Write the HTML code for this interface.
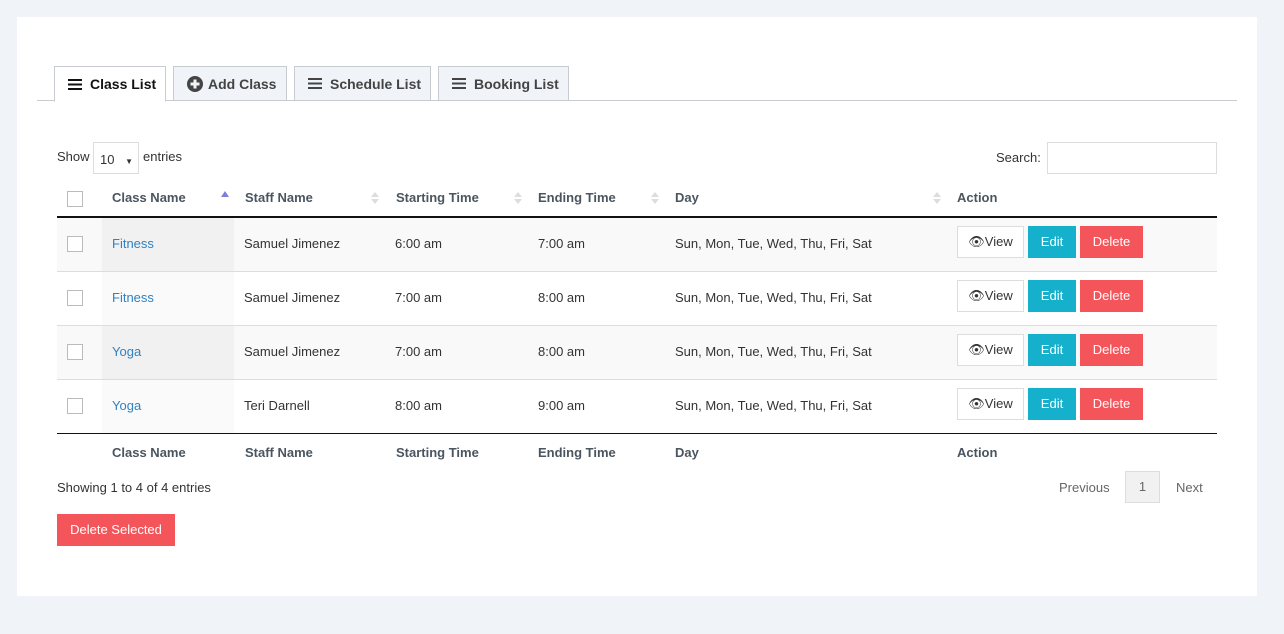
<!DOCTYPE html>
<html><head><meta charset="utf-8"><style>
*{box-sizing:border-box}
body{margin:0;background:#f0f3f7;font-family:"Liberation Sans",Arial,sans-serif;font-size:13px;color:#333;width:1284px;height:634px;overflow:hidden;position:relative}
div{white-space:nowrap}
.panel{position:absolute;left:17px;top:17px;width:1240px;height:579px;background:#fff}
.tabline{position:absolute;left:37px;top:100px;width:1200px;height:1px;background:#c8cbd0}
.tab{position:absolute;top:66px;height:35px;border:1px solid #c8cbd0;background:#f0f3f7;font-weight:bold;font-size:14px;color:#444;display:flex;align-items:center;padding-left:13px}
.tab.active{background:#fff;border-bottom-color:#fff;color:#111;height:36px}
.ham{display:inline-block;width:14px;height:11px;margin-right:8px;background:linear-gradient(currentColor 0 2px,transparent 2px 4.5px,currentColor 4.5px 6.5px,transparent 6.5px 9px,currentColor 9px 11px)}
.abs{position:absolute}
.hdr{position:absolute;font-weight:bold;color:#4a5560}
.cb{position:absolute;width:16px;height:16px;border:1px solid #bbb;background:#fff}
.row{position:absolute;left:57px;width:1160px;height:54px;border-bottom:1px solid #ddd}
.cell{position:absolute;top:18px}
.a{color:#2f82c3}
.btn{position:absolute;top:8px;height:32px;line-height:32px;text-align:center;color:#fff;font-size:13px}
.v{color:#333;border:1px solid #ddd;background:#fff;line-height:30px}
.sort{position:absolute;width:0;height:0;border-left:4px solid transparent;border-right:4px solid transparent}
</style></head><body>
<div class="panel"></div>
<div class="tabline"></div>
<div class="tab active" style="left:54px;width:112px"><span class="ham"></span>Class List</div>
<div class="tab" style="left:173px;width:114px"><svg width="16" height="16" viewBox="0 0 16 16" style="margin-right:5px"><circle cx="8" cy="8" r="8" fill="#444"/><rect x="6.5" y="3.5" width="3" height="9" fill="#f0f3f7"/><rect x="3.5" y="6.5" width="9" height="3" fill="#f0f3f7"/></svg>Add Class</div>
<div class="tab" style="left:294px;width:137px"><span class="ham"></span>Schedule List</div>
<div class="tab" style="left:438px;width:131px"><span class="ham"></span>Booking List</div>

<div class="abs" style="left:57px;top:149px">Show</div>
<div class="abs" style="left:93px;top:142px;width:46px;height:32px;border:1px solid #ddd;padding:9px 0 0 6px">10 <span style="font-size:8px;margin-left:7px">▼</span></div>
<div class="abs" style="left:143px;top:149px">entries</div>
<div class="abs" style="left:996px;top:150px">Search:</div>
<div class="abs" style="left:1047px;top:142px;width:170px;height:32px;border:1px solid #ddd"></div>

<div class="cb" style="left:67px;top:191px"></div>
<div class="hdr" style="left:112px;top:190px">Class Name</div>
<div class="sort" style="left:221px;top:191px;border-bottom:6px solid #7a7fd8"></div>
<div class="hdr" style="left:245px;top:190px">Staff Name</div>
<div class="hdr" style="left:396px;top:190px">Starting Time</div>
<div class="hdr" style="left:538px;top:190px">Ending Time</div>
<div class="hdr" style="left:675px;top:190px">Day</div>
<div class="hdr" style="left:957px;top:190px">Action</div>
<div class="sort" style="left:371px;top:192px;border-bottom:5px solid #ddd"></div><div class="sort" style="left:371px;top:199px;border-top:5px solid #ddd"></div>
<div class="sort" style="left:514px;top:192px;border-bottom:5px solid #ddd"></div><div class="sort" style="left:514px;top:199px;border-top:5px solid #ddd"></div>
<div class="sort" style="left:651px;top:192px;border-bottom:5px solid #ddd"></div><div class="sort" style="left:651px;top:199px;border-top:5px solid #ddd"></div>
<div class="sort" style="left:933px;top:192px;border-bottom:5px solid #ddd"></div><div class="sort" style="left:933px;top:199px;border-top:5px solid #ddd"></div>
<div class="abs" style="left:57px;top:216px;width:1160px;height:2px;background:#111"></div>

<div class="row" style="top:218px;background:#f9f9f9"><div class="abs" style="left:45px;top:0;width:132px;height:53px;background:#f1f1f1"></div></div>
<div class="row" style="top:272px;background:#fff"><div class="abs" style="left:45px;top:0;width:132px;height:53px;background:#fafafa"></div></div>
<div class="row" style="top:326px;background:#f9f9f9"><div class="abs" style="left:45px;top:0;width:132px;height:53px;background:#f1f1f1"></div></div>
<div class="row" style="top:380px;background:#fff;border-bottom:0"><div class="abs" style="left:45px;top:0;width:132px;height:53px;background:#fafafa"></div></div>
<div class="abs" style="left:57px;top:433px;width:1160px;height:1px;background:#111"></div>

<div style="position:absolute;left:0;top:218px">
<div class="cb" style="left:67px;top:18px"></div><div class="cell a" style="left:112px">Fitness</div><div class="cell" style="left:244px">Samuel Jimenez</div><div class="cell" style="left:395px">6:00 am</div><div class="cell" style="left:538px">7:00 am</div><div class="cell" style="left:675px">Sun, Mon, Tue, Wed, Thu, Fri, Sat</div>
<div class="btn v" style="left:957px;width:67px">👁View</div><div class="btn" style="left:1028px;width:48px;background:#14b0cc">Edit</div><div class="btn" style="left:1080px;width:63px;background:#f4555a">Delete</div>
</div>
<div style="position:absolute;left:0;top:272px">
<div class="cb" style="left:67px;top:18px"></div><div class="cell a" style="left:112px">Fitness</div><div class="cell" style="left:244px">Samuel Jimenez</div><div class="cell" style="left:395px">7:00 am</div><div class="cell" style="left:538px">8:00 am</div><div class="cell" style="left:675px">Sun, Mon, Tue, Wed, Thu, Fri, Sat</div>
<div class="btn v" style="left:957px;width:67px">👁View</div><div class="btn" style="left:1028px;width:48px;background:#14b0cc">Edit</div><div class="btn" style="left:1080px;width:63px;background:#f4555a">Delete</div>
</div>
<div style="position:absolute;left:0;top:326px">
<div class="cb" style="left:67px;top:18px"></div><div class="cell a" style="left:112px">Yoga</div><div class="cell" style="left:244px">Samuel Jimenez</div><div class="cell" style="left:395px">7:00 am</div><div class="cell" style="left:538px">8:00 am</div><div class="cell" style="left:675px">Sun, Mon, Tue, Wed, Thu, Fri, Sat</div>
<div class="btn v" style="left:957px;width:67px">👁View</div><div class="btn" style="left:1028px;width:48px;background:#14b0cc">Edit</div><div class="btn" style="left:1080px;width:63px;background:#f4555a">Delete</div>
</div>
<div style="position:absolute;left:0;top:380px">
<div class="cb" style="left:67px;top:18px"></div><div class="cell a" style="left:112px">Yoga</div><div class="cell" style="left:244px">Teri Darnell</div><div class="cell" style="left:395px">8:00 am</div><div class="cell" style="left:538px">9:00 am</div><div class="cell" style="left:675px">Sun, Mon, Tue, Wed, Thu, Fri, Sat</div>
<div class="btn v" style="left:957px;width:67px">👁View</div><div class="btn" style="left:1028px;width:48px;background:#14b0cc">Edit</div><div class="btn" style="left:1080px;width:63px;background:#f4555a">Delete</div>
</div>

<div class="hdr" style="left:112px;top:445px">Class Name</div>
<div class="hdr" style="left:245px;top:445px">Staff Name</div>
<div class="hdr" style="left:396px;top:445px">Starting Time</div>
<div class="hdr" style="left:538px;top:445px">Ending Time</div>
<div class="hdr" style="left:675px;top:445px">Day</div>
<div class="hdr" style="left:957px;top:445px">Action</div>

<div class="abs" style="left:57px;top:480px">Showing 1 to 4 of 4 entries</div>
<div class="abs" style="left:1059px;top:480px;color:#666">Previous</div>
<div class="abs" style="left:1125px;top:471px;width:35px;height:32px;border:1px solid #ddd;background:#f1f1f1;text-align:center;line-height:30px;color:#666">1</div>
<div class="abs" style="left:1176px;top:480px;color:#666">Next</div>
<div class="abs" style="left:57px;top:514px;width:118px;height:32px;background:#f4555a;color:#fff;text-align:center;line-height:32px">Delete Selected</div>
</body></html>
